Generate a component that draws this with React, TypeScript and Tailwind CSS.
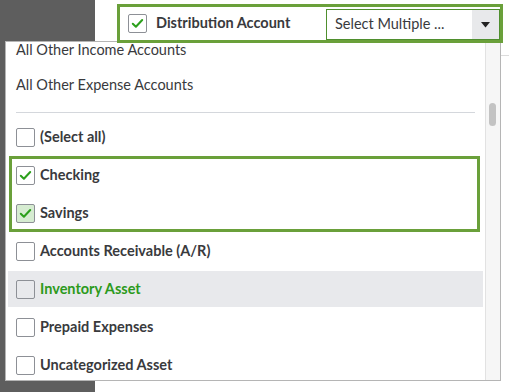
import React from "react";

function Check({ checked = false, tint = false, transparent = false }: { checked?: boolean; tint?: boolean; transparent?: boolean }) {
  return (
    <div
      className={`w-[19px] h-[19px] shrink-0 border border-[#8d9096] rounded-[2px] flex items-center justify-center ${
        tint ? "bg-[#d6ecd1]" : transparent ? "bg-transparent" : "bg-white"
      }`}
    >
      {checked && (
        <svg width="13" height="11" viewBox="0 0 13 11" fill="none">
          <path d="M1.8 5.8 L4.9 8.8 L11.2 2" stroke="#2ca01c" strokeWidth="2" strokeLinecap="round" strokeLinejoin="round" />
        </svg>
      )}
    </div>
  );
}

function Row({
  label,
  checked = false,
  tint = false,
  pl = "pl-[10px]",
}: {
  label: string;
  checked?: boolean;
  tint?: boolean;
  pl?: string;
}) {
  return (
    <div className={`h-[38px] flex items-center gap-[5px] ${pl}`}>
      <Check checked={checked} tint={tint} />
      <span className="text-[14.5px] font-bold text-[#393a3d] leading-none">{label}</span>
    </div>
  );
}

export default function App() {
  return (
    <div className="relative w-[509px] h-[392px] overflow-hidden bg-white font-['Lato',sans-serif]">
      <div className="absolute left-0 top-0 w-[95px] h-[392px] bg-[#5e5e5e]" />
      <div className="relative ml-[95px] h-[56px] border-b border-[#dcdcdc] pl-[22px] pt-[4px]">
        <div className="relative z-10 w-[386px] h-[39px] border-[3px] border-[#6aa03a] bg-white flex items-center pl-[8px]">
          <Check checked />
          <span className="ml-[9px] text-[14.5px] font-bold text-[#393a3d] leading-none">Distribution Account</span>
          <div className="ml-auto self-end h-[31px] w-[174px] border border-[#4f8f2e] flex bg-white">
            <div className="flex-1 flex items-center pl-[8px] text-[14.5px] text-[#393a3d] leading-none">Select Multiple ...</div>
            <div className="w-[27px] bg-[#e8e9eb] flex items-center justify-center">
              <svg width="9" height="6" viewBox="0 0 9 6">
                <path d="M0 0 H9 L4.5 5.5 Z" fill="#222" />
              </svg>
            </div>
          </div>
        </div>
      </div>

      <div className="absolute left-[5px] right-[8px] top-[41px] bottom-[11px] border border-[#b5b5b5] bg-white flex overflow-hidden">
        <div className="relative flex-1 overflow-hidden">
          <div className="absolute left-0 right-0 top-[-9px]">
            <div className="h-[35px] flex items-center pl-[10px] text-[14.5px] text-[#393a3d] leading-none">All Other Income Accounts</div>
            <div className="h-[35px] flex items-center pl-[10px] text-[14.5px] text-[#393a3d] leading-none">All Other Expense Accounts</div>
            <div className="mt-[9px] ml-[10px] mr-[10px] h-px bg-[#d4d7dc]" />
            <div className="mt-[5px]">
              <Row label="(Select all)" />
            </div>
            <div className="ml-[3px] mr-[5px] shadow-[inset_0_0_0_3px_#6aa03a]">
              <Row label="Checking" checked pl="pl-[7px]" />
              <Row label="Savings" checked tint pl="pl-[7px]" />
            </div>
            <Row label="Accounts Receivable (A/R)" />
            <div className="mx-[2px] my-[1px] h-[36px] bg-[#e8e9ec] flex items-center gap-[5px] pl-[8px]">
              <Check transparent />
              <span className="text-[14.5px] font-bold text-[#2c9a1c] leading-none">Inventory Asset</span>
            </div>
            <Row label="Prepaid Expenses" />
            <Row label="Uncategorized Asset" />
          </div>
        </div>
        <div className="w-[15px] shrink-0 bg-[#f6f6f6] border-l border-[#e2e2e2] relative">
          <div className="absolute left-[3px] top-[61px] w-[7px] h-[23px] rounded-full bg-[#c3c3c3]" />
        </div>
      </div>
    </div>
  );
}
